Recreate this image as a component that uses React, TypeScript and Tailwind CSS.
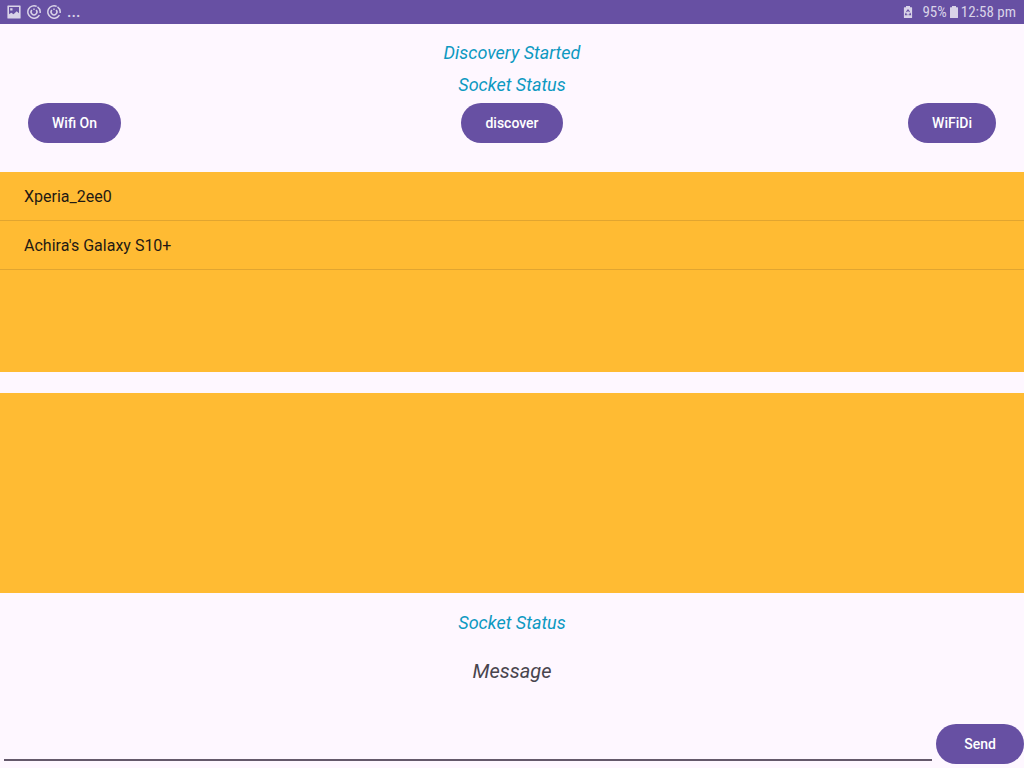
import { useState, type ComponentProps } from "react";

function PillButton({ className = "", ...props }: ComponentProps<"button">) {
  return (
    <button
      type="button"
      className={`h-10 rounded-full bg-[#6750a3] px-6 text-sm font-medium text-white ${className}`}
      {...props}
    />
  );
}

function PictureIcon() {
  return (
    <svg viewBox="0 0 14 14" className="size-3.5" aria-hidden="true">
      <path
        fill="currentColor"
        fillRule="evenodd"
        d="M1 .5h12a.6.6 0 0 1 .6.6v11.8a.6.6 0 0 1-.6.6H1a.6.6 0 0 1-.6-.6V1.1a.6.6 0 0 1 .6-.6ZM2 2v7.2l2.300-1.400 2.200 1.400L9.700 6.300 12 8.300V2ZM3.200 3.200h2.300v2.300h-2.300Z"
      />
    </svg>
  );
}

function SyncCircleIcon() {
  return (
    <svg viewBox="0 0 14 14" className="size-3.5" fill="none" stroke="currentColor" aria-hidden="true">
      <path strokeWidth="1.5" d="M12.400 10.100A6.200 6.200 0 1 1 9.700 1.400M10.500 1.900A6.200 6.200 0 0 1 13.100 8" />
      <path strokeWidth="1.5" d="M4.900 4.900A2.900 2.900 0 1 0 9.100 4.900" />
      <path strokeWidth="1.4" d="M7 3.600V5" />
    </svg>
  );
}

function BatterySaverIcon() {
  return (
    <svg viewBox="0 0 10 12" className="h-3 w-2.5" aria-hidden="true">
      <path fill="currentColor" d="M3 0h4v1.3h1.6a.5.5 0 0 1 .5.5v9.7a.5.5 0 0 1-.5.5H1.4a.5.5 0 0 1-.5-.5V1.8a.5.5 0 0 1 .5-.5H3Z" />
      <path fill="none" stroke="#6750a3" strokeWidth="1.1" d="M3.500 5.900 5 3.900 6.500 5.900M7 6.800 7.500 8.700H5.600M4.400 8.700H2.500L3.100 6.800" />
    </svg>
  );
}

function BatteryIcon() {
  return (
    <svg viewBox="0 0 8 12" className="h-3 w-2" aria-hidden="true">
      <path fill="currentColor" d="M2 0h4v1.3h1.5a.5.5 0 0 1 .5.5v9.7a.5.5 0 0 1-.5.5H.5a.5.5 0 0 1-.5-.5V1.8a.5.5 0 0 1 .5-.5H2Z" />
    </svg>
  );
}

function StatusBar() {
  return (
    <header className="flex h-6 items-center justify-between bg-[#6750a3] px-2 text-[#d9d3e8]">
      <div className="-ml-px flex items-center gap-1.5">
        <PictureIcon />
        <SyncCircleIcon />
        <SyncCircleIcon />
        <span className="text-base leading-6 font-medium">...</span>
      </div>
      <div className="flex items-center gap-[3px] font-['Roboto_Condensed','Roboto',sans-serif] text-[15px] leading-6">
        <BatterySaverIcon />
        <span className="ml-1.5">95%</span>
        <BatteryIcon />
        <span>12:58 pm</span>
      </div>
    </header>
  );
}

const devices = ["Xperia_2ee0", "Achira's Galaxy S10+"];

export default function App() {
  const [draft, setDraft] = useState("");

  return (
    <div className="flex min-h-screen flex-col bg-[#fef7ff] font-['Roboto',sans-serif]">
      <StatusBar />
      <main className="flex grow flex-col">
        <div className="pt-[13px] text-center text-lg leading-8 text-[#0d99c1] italic">
          <p>Discovery Started</p>
          <p>Socket Status</p>
        </div>
        <div className="mt-0.5 grid grid-cols-[1fr_auto_1fr] px-7 pb-[29px]">
          <PillButton className="justify-self-start">Wifi On</PillButton>
          <PillButton>discover</PillButton>
          <PillButton className="justify-self-end">WiFiDi</PillButton>
        </div>
        <ul className="h-50 bg-[#ffbb33] text-base text-[#1f1a14]">
          {devices.map((name) => (
            <li key={name} className="border-b border-[#e1a530] px-6 pt-0.5 leading-[46px]">
              {name}
            </li>
          ))}
        </ul>
        <section aria-label="Messages" className="mt-[21px] h-50 bg-[#ffbb33]" />
        <p className="mt-3 text-center text-lg leading-9 text-[#0d99c1] italic">Socket Status</p>
        <p className="mt-3 text-center text-xl leading-9 text-[#49454e] italic">Message</p>
        <form className="mt-auto flex items-end pb-1" onSubmit={(event) => event.preventDefault()}>
          <input
            aria-label="Message"
            value={draft}
            onChange={(event) => setDraft(event.target.value)}
            className="mx-1 mb-[3px] h-9 min-w-0 grow border-b-2 border-[#64596b] bg-transparent px-1 text-lg outline-none"
          />
          <PillButton type="submit" className="w-22">
            Send
          </PillButton>
        </form>
      </main>
    </div>
  );
}
